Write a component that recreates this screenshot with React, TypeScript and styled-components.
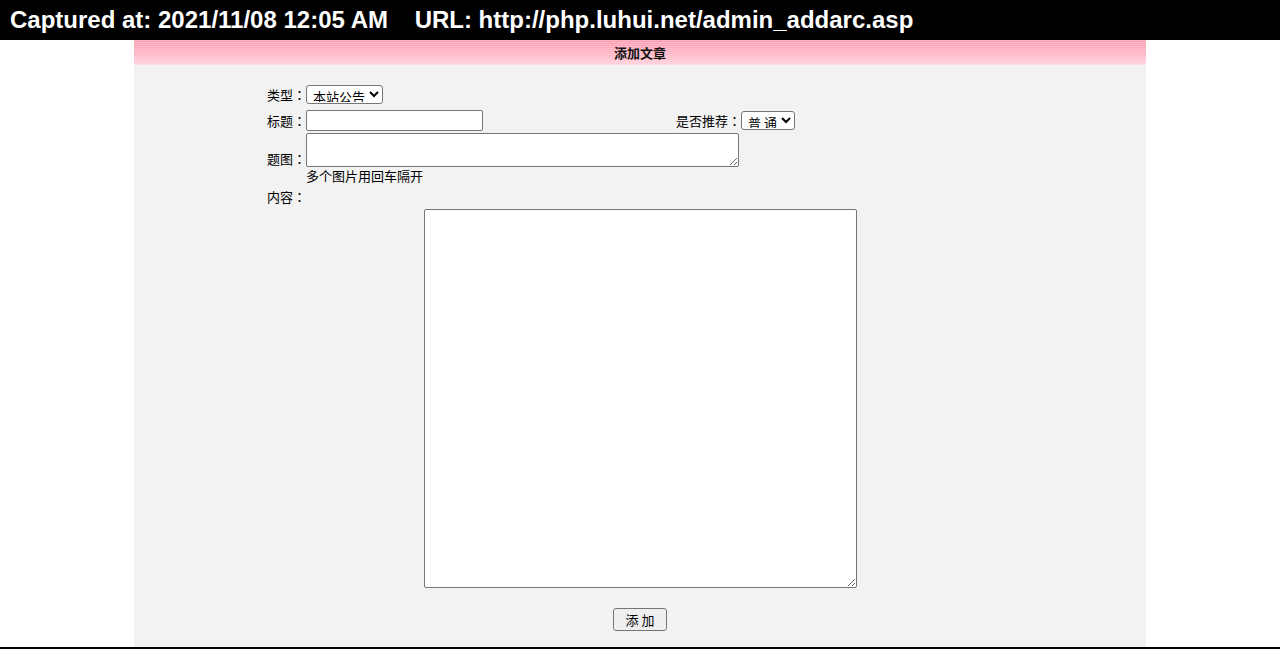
import React from "react";
import styled, { createGlobalStyle } from "styled-components";

const GlobalStyle = createGlobalStyle`
  html, body {
    margin: 0;
    padding: 0;
    background: #ffffff;
  }
  body {
    font-family: "Microsoft YaHei", "Noto Sans CJK SC", "Liberation Sans", sans-serif;
  }
`;

const Page = styled.div`
  display: flex;
  flex-direction: column;
  height: 649px;
  overflow: hidden;
  box-sizing: border-box;
  border-bottom: 2px solid #000;
`;

const CaptureBar = styled.div`
  height: 40px;
  flex: 0 0 40px;
  background: #000;
  color: #fff;
  font-family: "Liberation Sans", Arial, sans-serif;
  font-weight: bold;
  font-size: 24px;
  line-height: 40px;
  padding-left: 10px;
  white-space: pre;
`;

const Panel = styled.div`
  width: 1012px;
  margin: 0 auto;
  flex: 1;
  display: flex;
  flex-direction: column;
  background: #f2f2f2;
`;

const PanelTitle = styled.div`
  height: 25px;
  line-height: 25px;
  text-align: center;
  font-size: 13px;
  font-weight: bold;
  color: #111;
  background:
    repeating-linear-gradient(
      to bottom,
      rgba(255, 255, 255, 0.18) 0px,
      rgba(255, 255, 255, 0.18) 1px,
      rgba(255, 255, 255, 0) 1px,
      rgba(255, 255, 255, 0) 2px
    ),
    linear-gradient(to bottom, #ff9fb3 0%, #ffb6c6 55%, #ffd3de 100%);
`;

const Form = styled.form`
  display: flex;
  flex-direction: column;
  padding: 20px 0 0 133px;
  font-size: 13px;
  color: #000;
`;

const Row = styled.div<{ $gap?: number; $align?: string; $width?: number }>`
  display: flex;
  align-items: ${(p) => p.$align ?? "center"};
  margin-top: ${(p) => p.$gap ?? 0}px;
  width: ${(p) => (p.$width ? `${p.$width}px` : "auto")};
  line-height: 16px;
`;

const Label = styled.span`
  display: inline-block;
  width: 39px;
  white-space: nowrap;
`;

/* full-width colon drawn centred in its cell */
const Colon = styled.span`
  font-family: "Noto Sans CJK TC", "Noto Sans CJK SC", sans-serif;
`;

const Spacer = styled.div`
  flex: 1;
`;

const Select = styled.select<{ $w: number }>`
  width: ${(p) => p.$w}px;
  height: 19px;
  box-sizing: border-box;
  font-family: inherit;
  font-size: 13px;
  line-height: 15px;
  padding: 0 0 1px 2px;
  border: 1px solid #767676;
  border-radius: 3px;
  background: #fff;
  color: #000;
  margin: 0;
`;

const TextInput = styled.input`
  width: 177px;
  height: 21px;
  box-sizing: border-box;
  border: 1px solid #767676;
  border-radius: 2px;
  background: #fff;
  margin: 0;
  padding: 1px 2px;
  font-size: 13px;
`;

const TextArea = styled.textarea<{ $h: number }>`
  width: 433px;
  height: ${(p) => p.$h}px;
  box-sizing: border-box;
  border: 1px solid #767676;
  border-radius: 2px;
  background: #fff;
  margin: 0;
  padding: 2px;
  font-size: 13px;
  font-family: inherit;
`;

const Hint = styled.div`
  margin: 1px 0 0 39px;
  line-height: 16px;
`;

const ContentLabel = styled.div`
  margin-top: 5px;
  line-height: 16px;
`;

const EditorWrap = styled.div`
  display: flex;
  justify-content: center;
  margin-top: 4px;
`;

const SubmitRow = styled.div`
  display: flex;
  justify-content: center;
  padding: 20px 0 0;
`;

const Button = styled.button`
  width: 54px;
  height: 23px;
  box-sizing: border-box;
  border: 1px solid #767676;
  border-radius: 3px;
  background: #efefef;
  font-family: inherit;
  font-size: 13px;
  color: #000;
  padding: 0;
  margin: 0;
  white-space: pre;
`;

export default function App() {
  return (
    <>
      <GlobalStyle />
      <Page>
        <CaptureBar>{"Captured at: 2021/11/08 12:05 AM    URL: http://php.luhui.net/admin_addarc.asp"}</CaptureBar>
        <Panel>
          <PanelTitle>添加文章</PanelTitle>
          <Form onSubmit={(e) => e.preventDefault()}>
            <Row>
              <Label>
                类型<Colon>：</Colon>
              </Label>
              <Select $w={77} defaultValue="notice">
                <option value="notice">本站公告</option>
                <option value="news">行业新闻</option>
              </Select>
            </Row>
            <Row $gap={6} $width={528}>
              <Label>
                标题<Colon>：</Colon>
              </Label>
              <TextInput type="text" />
              <Spacer />
              <span>
                是否推荐<Colon>：</Colon>
              </span>
              <Select $w={54} defaultValue="0">
                <option value="0">普 通</option>
                <option value="1">推 荐</option>
              </Select>
            </Row>
            <Row $gap={2} $align="flex-end">
              <Label>
                题图<Colon>：</Colon>
              </Label>
              <TextArea $h={34} />
            </Row>
            <Hint>多个图片用回车隔开</Hint>
            <ContentLabel>
              内容<Colon>：</Colon>
            </ContentLabel>
          </Form>
          <EditorWrap>
            <TextArea $h={379} />
          </EditorWrap>
          <SubmitRow>
            <Button type="button">{"添 加"}</Button>
          </SubmitRow>
        </Panel>
      </Page>
    </>
  );
}
